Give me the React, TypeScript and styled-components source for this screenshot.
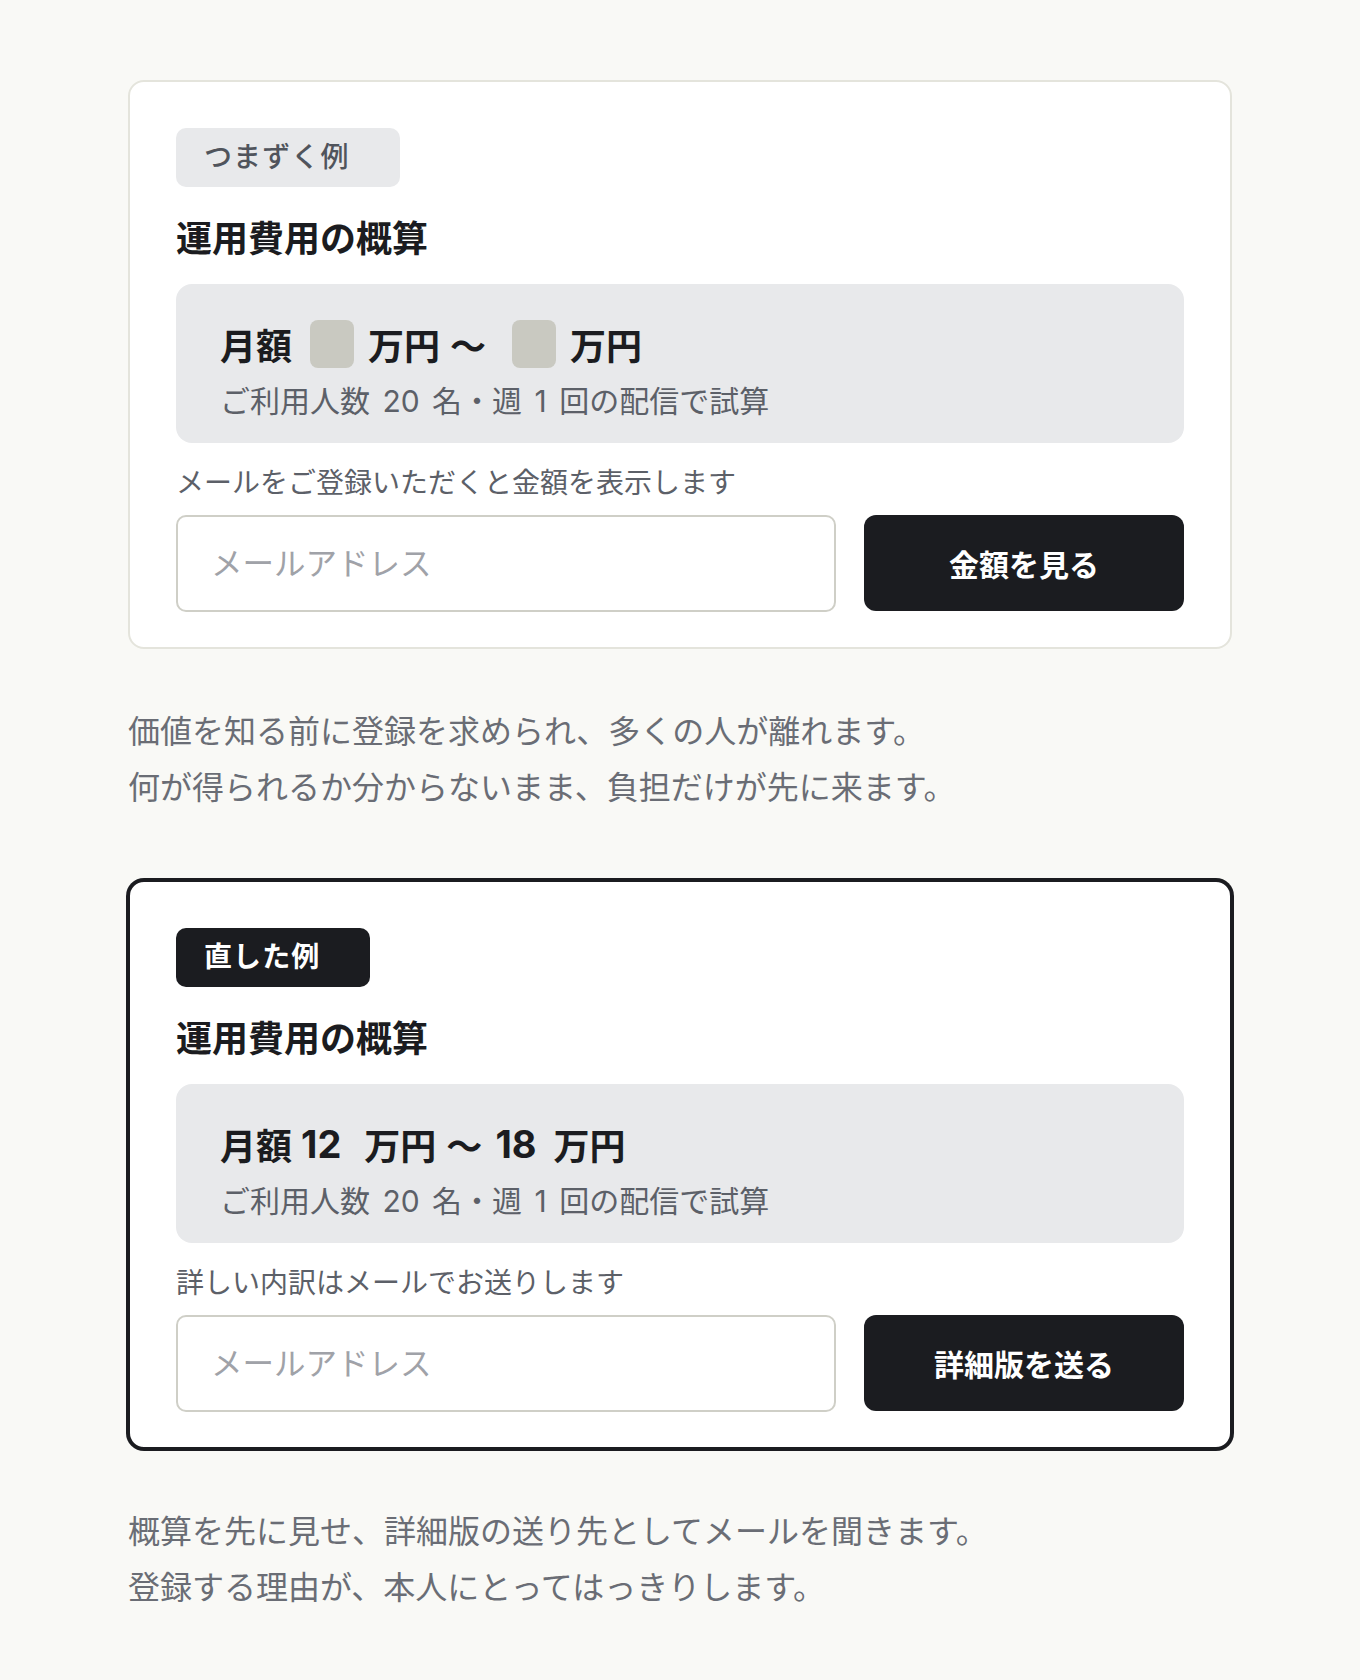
import React from "react";
import styled, { createGlobalStyle, css } from "styled-components";

const GlobalStyle = createGlobalStyle`
  body {
    margin: 0;
    background: #f9f9f6;
    font-family: Inter, "Noto Sans CJK JP", "Noto Sans", sans-serif;
    color: #1b1c20;
  }
  * {
    box-sizing: border-box;
  }
`;

const Page = styled.main`
  width: 1104px;
  margin: 0 auto;
  padding: 80px 0 60px;
`;

const Card = styled.section<{ $strong?: boolean }>`
  display: flex;
  flex-direction: column;
  background: #fff;
  border-radius: 16px;
  padding: 46px 46px 35px;
  border: 2px solid ${(p) => (p.$strong ? "#1b1c20" : "#e4e4dc")};
  ${(p) =>
    p.$strong &&
    css`
      box-shadow: 0 0 0 2px #1b1c20;
    `}
`;

const Badge = styled.span<{ $strong?: boolean }>`
  align-self: flex-start;
  height: 59px;
  line-height: 59px;
  padding: 0 50px 0 28px;
  border-radius: 10px;
  font-size: 28px;
  letter-spacing: 0.04em;
  font-weight: ${(p) => (p.$strong ? 700 : 500)};
  background: ${(p) => (p.$strong ? "#1b1c20" : "#e8e9eb")};
  color: ${(p) => (p.$strong ? "#fff" : "#50545c")};
`;

const Title = styled.h3`
  margin: 25px 0 18px;
  font-size: 36px;
  line-height: 54px;
  font-weight: 700;
`;

const Estimate = styled.div`
  background: #e8e9eb;
  border-radius: 16px;
  padding: 33px 44px 19px;
`;

const PriceRow = styled.div`
  display: flex;
  align-items: center;
  height: 54px;
  font-size: 36px;
  font-weight: 700;
  white-space: nowrap;
`;

const Piece = styled.span<{ $ml?: number }>`
  margin-left: ${(p) => p.$ml ?? 0}px;
`;

// amounts are set a touch larger than the kanji beside them
const Figure = styled(Piece)`
  font-size: 38px;
  line-height: 54px;
`;

// hidden amount before the address is given
const Blank = styled.span<{ $ml?: number }>`
  display: inline-block;
  width: 44px;
  height: 48px;
  border-radius: 8px;
  background: #c9c9c1;
  margin-left: ${(p) => p.$ml ?? 0}px;
`;

const Basis = styled.div`
  margin-top: 7px;
  font-size: 30px;
  line-height: 46px;
  color: #5c6068;
  word-spacing: 4px;
`;

const Label = styled.p`
  margin: 20px 0 12px;
  font-size: 28px;
  line-height: 40px;
  color: #5c6068;
`;

const Form = styled.form`
  display: grid;
  grid-template-columns: 1fr 320px;
  gap: 28px;
  height: 97px;
`;

const Input = styled.input`
  height: 100%;
  border: 2px solid #cfcfc7;
  border-radius: 10px;
  padding: 0 33px;
  font-family: inherit;
  font-size: 31.5px;
  color: #1b1c20;
  background: #fff;
  outline: none;
  &::placeholder {
    color: #a0a2a8;
  }
`;

const Submit = styled.button`
  height: 96px;
  border: 0;
  border-radius: 12px;
  background: #1b1c20;
  color: #fff;
  font-family: inherit;
  font-size: 30px;
  font-weight: 700;
  cursor: pointer;
`;

const Note = styled.p`
  margin: 55px 0 64px;
  font-size: 32px;
  line-height: 56px;
  color: #6a6d75;
`;

type Props = {
  strong?: boolean;
  badge: string;
  price: React.ReactNode;
  label: string;
  action: string;
};

const Example = ({ strong, badge, price, label, action }: Props) => (
  <Card $strong={strong}>
    <Badge $strong={strong}>{badge}</Badge>
    <Title>運用費用の概算</Title>
    <Estimate>
      <PriceRow>{price}</PriceRow>
      <Basis>ご利用人数 20 名・週 1 回の配信で試算</Basis>
    </Estimate>
    <Label>{label}</Label>
    <Form onSubmit={(e) => e.preventDefault()}>
      <Input type="email" placeholder="メールアドレス" />
      <Submit type="submit">{action}</Submit>
    </Form>
  </Card>
);

export default function App() {
  return (
    <>
      <GlobalStyle />
      <Page>
        <Example
          badge="つまずく例"
          label="メールをご登録いただくと金額を表示します"
          action="金額を見る"
          price={
            <>
              <Piece>月額</Piece>
              <Blank $ml={18} />
              <Piece $ml={14}>万円</Piece>
              <Piece $ml={10}>〜</Piece>
              <Blank $ml={26} />
              <Piece $ml={14}>万円</Piece>
            </>
          }
        />
        <Note>
          価値を知る前に登録を求められ、多くの人が離れます。
          <br />
          何が得られるか分からないまま、負担だけが先に来ます。
        </Note>
        <Example
          strong
          badge="直した例"
          label="詳しい内訳はメールでお送りします"
          action="詳細版を送る"
          price={
            <>
              <Piece>月額</Piece>
              <Figure $ml={9}>12</Figure>
              <Piece $ml={23}>万円</Piece>
              <Piece $ml={10}>〜</Piece>
              <Figure $ml={13}>18</Figure>
              <Piece $ml={17}>万円</Piece>
            </>
          }
        />
        <Note>
          概算を先に見せ、詳細版の送り先としてメールを聞きます。
          <br />
          登録する理由が、本人にとってはっきりします。
        </Note>
      </Page>
    </>
  );
}
